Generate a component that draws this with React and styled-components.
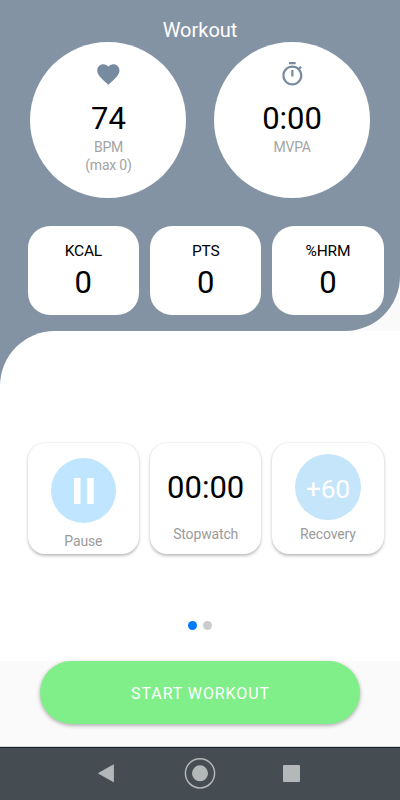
import React, {useState} from 'react'
import styled, {createGlobalStyle} from 'styled-components'

const GlobalStyle = createGlobalStyle`
  * {
    box-sizing: border-box;
  }
  body {
    margin: 0;
    background-color: #fafafa;
    font-family: Roboto, "Liberation Sans", sans-serif;
  }
`;

const Screen = styled.div`
  width: 400px;
  height: 800px;
  display: flex;
  flex-direction: column;
  overflow: hidden;
  background-color: #fafafa;
`;

const Header = styled.header`
  height: 330.5px;
  flex: none;
  padding: 16px 16.3px 0 27.7px;
  background-color: #8493a4;
  border-bottom-right-radius: 55px;
`;

const Title = styled.h1`
  margin: 0;
  padding-right: 11.4px;
  height: 26.4px;
  line-height: 29px;
  font-size: 20px;
  font-weight: 400;
  text-align: center;
  color: #fff;
`;

const Dials = styled.div`
  display: flex;
  gap: 27.6px;
  padding-left: 2.8px;
`;

const Dial = styled.div`
  width: 156px;
  height: 156px;
  padding-top: 18.4px;
  border-radius: 50%;
  display: flex;
  flex-direction: column;
  align-items: center;
  background-color: #fff;
`;

const DialIcon = styled.svg`
  width: 26.7px;
  height: 26.7px;
  fill: #778ba0;
`;

const DialValue = styled.div`
  margin-top: 12.6px;
  height: 37.6px;
  line-height: 38px;
  font-size: 31px;
  color: #000;
`;

const DialLabel = styled.div`
  line-height: 18px;
  font-size: 14px;
  letter-spacing: -0.2px;
  white-space: pre-line;
  text-align: center;
  color: #a4a4a4;
`;

const Row = styled.div`
  display: grid;
  grid-template-columns: repeat(3, 111.3px);
  gap: 11px;
`;

const StatRow = styled(Row)`
  margin-top: 27.4px;
`;

const Stat = styled.div`
  height: 89.5px;
  padding-top: 16px;
  border-radius: 22px;
  text-align: center;
  background-color: #fff;
  color: #000;
`;

const StatLabel = styled.div`
  line-height: 18px;
  font-size: 15.5px;
  letter-spacing: -0.2px;
`;

const StatValue = styled.div`
  margin-top: 4px;
  line-height: 38px;
  font-size: 31px;
`;

/* keeps the header colour behind the rounded corner of the panel */
const PanelBack = styled.div`
  flex: none;
  background: linear-gradient(to bottom, #8493a4 60px, #fff 60px);
`;

const Panel = styled.main`
  height: 330.5px;
  padding: 112px 16.3px 0 27.7px;
  border-top-left-radius: 55px;
  background-color: #fff;
`;

const Card = styled.div`
  height: 111.3px;
  padding-top: ${(props) => props.$top}px;
  border-radius: 17px;
  display: flex;
  flex-direction: column;
  align-items: center;
  background-color: #fff;
  box-shadow: 0 1.5px 3px rgba(0, 0, 0, 0.25), 0 0 1px rgba(0, 0, 0, 0.08);
`;

const RoundButton = styled.button`
  width: ${(props) => props.$size}px;
  height: ${(props) => props.$size}px;
  flex: none;
  padding: 3px 0 0;
  border: none;
  border-radius: 50%;
  display: flex;
  align-items: center;
  justify-content: center;
  font-family: inherit;
  font-size: 26.5px;
  letter-spacing: -0.2px;
  color: #fff;
  background-color: ${(props) => props.$bg};
  cursor: pointer;
`;

const PauseButton = styled(RoundButton)`
  padding: 0 0 0 2px;
`;

const Clock = styled.div`
  height: 66.6px;
  line-height: 67px;
  font-size: 31px;
  color: #000;
`;

const CardLabel = styled.div`
  margin-top: ${(props) => props.$gap}px;
  line-height: 18px;
  font-size: 14px;
  letter-spacing: -0.15px;
  color: #9b9b9b;
`;

const Dots = styled.div`
  margin-top: 67.4px;
  padding-right: 11.4px;
  display: flex;
  justify-content: center;
  gap: 6.6px;
`;

const Dot = styled.button`
  width: 9px;
  height: 9px;
  padding: 0;
  border: none;
  border-radius: 50%;
  background-color: ${(props) => props.$active ? "#007aff" : "#cccccc"};
`;

const Footer = styled.div`
  height: 86px;
  flex: none;
  padding: 0 40px;
  background-color: #fafafa;
  border-bottom: 1px solid #d5d6d6;
`;

const StartButton = styled.button`
  width: 100%;
  height: 63.3px;
  padding: 2px 0 0 1px;
  border: none;
  border-radius: 32px;
  font-family: inherit;
  font-size: 16px;
  letter-spacing: 0.9px;
  text-transform: uppercase;
  color: #fff;
  background-color: #80ee89;
  box-shadow: 0 1.5px 4px rgba(0, 0, 0, 0.32);
  cursor: pointer;
`;

const NavBar = styled.nav`
  flex: 1;
  display: flex;
  justify-content: center;
  border-top: 1px solid #15222a;
  background-color: #454d53;
`;

const stats = [
    {id: 1, label: 'KCAL', value: 0},
    {id: 2, label: 'PTS', value: 0},
    {id: 3, label: '%HRM', value: 0},
]

const App = () => {
    const [page, setPage] = useState(0)

    return (
        <Screen>
            <GlobalStyle/>
            <Header>
                <Title>Workout</Title>
                <Dials>
                    <Dial>
                        <DialIcon viewBox="0 0 24 24">
                            <path d="M12 21.35l-1.45-1.32C5.4 15.36 2 12.28 2 8.5 2 5.42 4.42 3 7.5 3c1.74 0 3.41.81 4.5 2.09C13.09 3.81 14.76 3 16.5 3 19.58 3 22 5.42 22 8.5c0 3.78-3.4 6.86-8.55 11.54L12 21.35z"/>
                        </DialIcon>
                        <DialValue>74</DialValue>
                        <DialLabel>{'BPM\n(max 0)'}</DialLabel>
                    </Dial>
                    <Dial>
                        <DialIcon viewBox="0 0 24 24">
                            <path d="M15 1H9v2h6V1zm-4 13h2V8h-2v6zm8.03-6.61l1.42-1.42c-.43-.51-.9-.99-1.41-1.41l-1.42 1.42C16.07 4.74 14.12 4 12 4c-4.97 0-9 4.03-9 9s4.02 9 9 9 9-4.03 9-9c0-2.12-.74-4.07-1.97-5.61zM12 20c-3.87 0-7-3.13-7-7s3.13-7 7-7 7 3.13 7 7-3.13 7-7 7z"/>
                        </DialIcon>
                        <DialValue>0:00</DialValue>
                        <DialLabel>MVPA</DialLabel>
                    </Dial>
                </Dials>
                <StatRow>
                    {stats.map((item) => (
                        <Stat key={item.id}>
                            <StatLabel>{item.label}</StatLabel>
                            <StatValue>{item.value}</StatValue>
                        </Stat>
                    ))}
                </StatRow>
            </Header>
            <PanelBack>
                <Panel>
                    <Row>
                        <Card $top={15.7}>
                            <PauseButton $size={65} $bg="#bfe5ff" aria-label="Pause">
                                <svg width="20" height="26" viewBox="0 0 20 26" fill="#fff">
                                    <rect width="6.5" height="26"/>
                                    <rect x="13.2" width="6.5" height="26"/>
                                </svg>
                            </PauseButton>
                            <CardLabel $gap={8.6}>Pause</CardLabel>
                        </Card>
                        <Card $top={11.2}>
                            <Clock>00:00</Clock>
                            <CardLabel $gap={5}>Stopwatch</CardLabel>
                        </Card>
                        <Card $top={11.2}>
                            <RoundButton $size={66.6} $bg="#c5e5fa">+60</RoundButton>
                            <CardLabel $gap={5}>Recovery</CardLabel>
                        </Card>
                    </Row>
                    <Dots>
                        {[0, 1].map((n) => (
                            <Dot key={n} $active={page === n} onClick={() => setPage(n)}/>
                        ))}
                    </Dots>
                </Panel>
            </PanelBack>
            <Footer>
                <StartButton>Start workout</StartButton>
            </Footer>
            <NavBar>
                <svg width="400" height="52" viewBox="0 0 400 52" fill="#b4b8b9">
                    <path d="M98.5 25.3L113.5 16.8V33.8Z" stroke="#b4b8b9" strokeLinejoin="round" strokeWidth="0.8"/>
                    <circle cx="200" cy="25.3" r="14.6" fill="none" stroke="#b4b8b9" strokeWidth="1.5"/>
                    <circle cx="200" cy="25.3" r="8"/>
                    <rect x="283" y="17" width="17" height="17" rx="1"/>
                </svg>
            </NavBar>
        </Screen>
    );
};

export default App
